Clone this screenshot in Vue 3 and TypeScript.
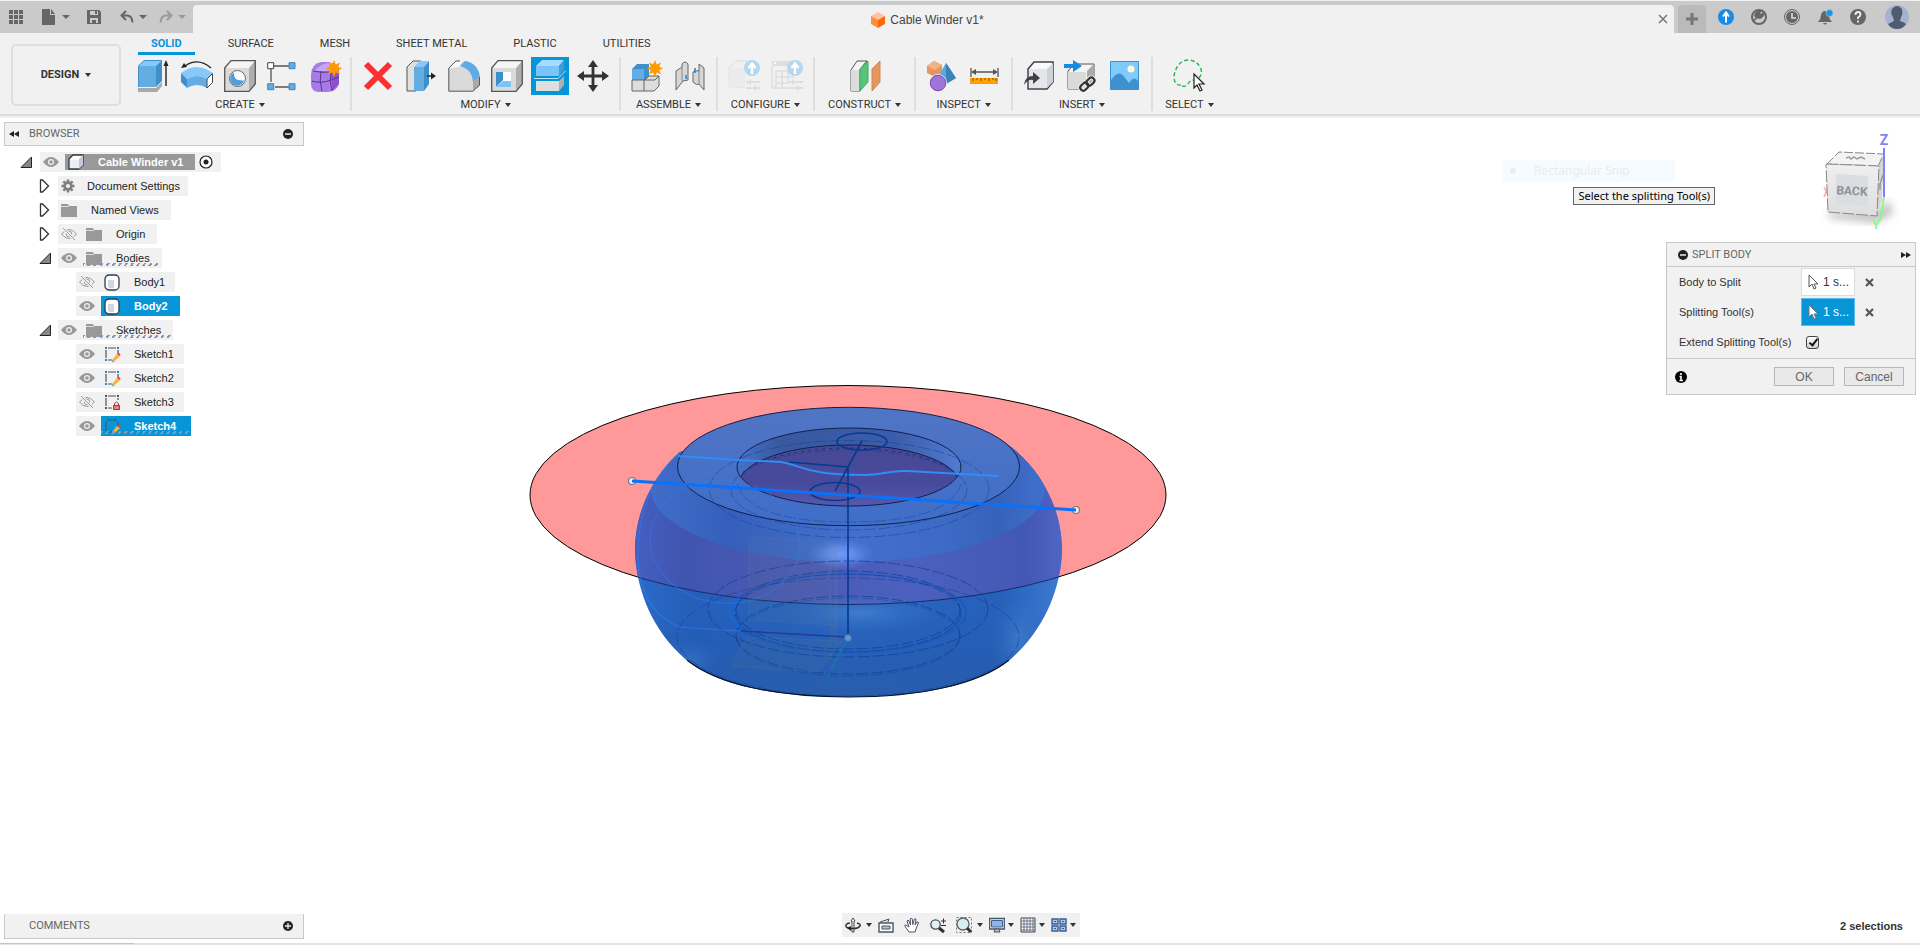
<script setup lang="ts">
import { ref } from 'vue'

interface Tool { name: string; art: string; active?: boolean }
interface Group { label: string; tools: Tool[] }
interface TreeRow {
  label: string; level: number; kind: string; arrow?: 'open' | 'closed'
  eye?: 'on' | 'off'; selected?: boolean; hatched?: boolean
}

const tabs = ['SOLID', 'SURFACE', 'MESH', 'SHEET METAL', 'PLASTIC', 'UTILITIES']
const activeTab = ref('SOLID')
const extend = ref(true)

const star = '<path d="M24 0l1.8 4.4L30 2.6l-1.8 4.2 4 1.6-4 1.6 1.8 4.2-4.2-1.6L24 17l-1.8-4.4-4.2 1.6 1.8-4.2-4-1.6 4-1.6L18 2.6l4.2 1.8z" fill="#f90" />'
const upBadge = '<circle cx="24" cy="8" r="8" fill="#b5d8ef"/><path d="M24 14V4M20.500 8L24 3.500 27.500 8" fill="none" stroke="#fff" stroke-width="2.400"/>'
const sliders = '<path d="M18 22h14M18 28h14M22 19.500v5M27 25.500v5" stroke="#dedede" stroke-width="2"/>'

const groups: Group[] = [
  { label: 'CREATE', tools: [
    { name: 'Extrude', art: '<path d="M0 28h18l6-6v4l-5 6H0z" fill="#a9a9a9"/><path d="M0 6l6-6h18l-6 6z" fill="#86c8fb"/><path d="M18 6l6-6v21l-6 6z" fill="#3f8fcb"/><path d="M0 6h18v21H0z" fill="#64ade3"/><path d="M.5 27V6L6 .5h18" fill="none" stroke="#4391ca"/><path d="M28 26V3" stroke="#222" stroke-width="1.400"/><path d="M28 0l2.500 6h-5z" fill="#222"/>' },
    { name: 'Revolve', art: '<path d="M0 13Q15 1 32 13l-6 6q-10-6-20 0z" fill="#86c8fb"/><path d="M0 13l6 6v9l-6-6z" fill="#3f8fcb"/><path d="M6 19q10-6 20 0v9q-10-6-20 0z" fill="#64ade3"/><path d="M26 19l5.500-5.500v9L26 28z" fill="#fff" stroke="#444"/><path d="M4 6q13-9 26 2" fill="none" stroke="#222" stroke-width="1.300"/><path d="M0 8l3-5 3 4z" fill="#222"/>' },
    { name: 'Hole', art: '<path d="M1 8l7-7h23l-6 7z" fill="#f5f5f5"/><path d="M25 8l6-7v23l-6 7z" fill="#aeaeae"/><path d="M1 8h24v23H1z" fill="#dadada"/><path d="M.7 8L7 .7h24.300V24L25 31.300H.7z" fill="none" stroke="#555" stroke-width="1.300"/><circle cx="13.500" cy="18.500" r="8" fill="#fafafa" stroke="#666"/><path d="M10 12.500q-1 9 10 8a7 7 0 1 1-10-8z" fill="#4f9ddd"/>' },
    { name: 'Sketch pattern', art: '<path d="M7 6h16M4 9v13M8 27h16" stroke="#555" stroke-width="1.300"/><path d="M.7 2.700h6v6h-6z" fill="#fff" stroke="#444"/><g fill="#64ade3" stroke="#3b86c0"><path d="M22 2.700h6v6h-6zM.7 23.700h6v6h-6zM22 23.700h6v6h-6z"/></g>' },
    { name: 'Create form', art: '<path d="M1 15Q1 4 11 2h8q10 2 10 12v10q-2 7-11 8H8q-7-1-7-8z" fill="#a77be8"/><path d="M5 11q6-9 17-8l6 7q-4 4-7 1H8z" fill="#c6a5f5"/><path d="M21 13l8-6v17l-7 7z" fill="#8b4fd0"/><path d="M2 21q9 3 19-1l8-3M11 11q-2 10 1 20M21 12q-2 10 1 19M3 11q9 2 18 1" fill="none" stroke="#5c348d"/><g>' + star + '</g>' },
  ] },
  { label: 'MODIFY', tools: [
    { name: 'Delete', art: '<path d="M4 4l24 24M28 4L4 28" stroke="#fb2f30" stroke-width="6"/>' },
    { name: 'Press pull', art: '<path d="M2 7l6-6h8l-5 6v24H2z" fill="#e0e0e0" stroke="#555"/><path d="M9 7l6-6h9l-5 6z" fill="#86c8fb"/><path d="M19 7l5-6v23l-5 7z" fill="#3f8fcb"/><path d="M9 7h10v24H9z" fill="#64ade3"/><path d="M22 16h6" stroke="#222" stroke-width="1.400"/><path d="M26 12.500l5 3.500-5 3.500z" fill="#222"/>' },
    { name: 'Fillet', art: '<path d="M1 8l7-7h10l6 2 8 13v9l-7 6H1z" fill="#dadada"/><path d="M1 8l7-7h7l-4 6z" fill="#f7f7f7"/><path d="M12 6l5-5q13 2 15 16l-7 5Q24 9 12 6z" fill="#5fabe3"/><path d="M25 22l7-6v9l-7 6z" fill="#aaa"/><path d="M12 1H8L.8 8v23.200H25l6.500-6v-8" fill="none" stroke="#555"/>' },
    { name: 'Shell', art: '<path d="M1 8l7-7h23l-6 7z" fill="#f5f5f5"/><path d="M25 8l6-7v23l-6 7z" fill="#aeaeae"/><path d="M1 8h24v23H1z" fill="#dadada"/><path d="M.7 8L7 .7h24.300V24L25 31.300H.7z" fill="none" stroke="#555" stroke-width="1.300"/><path d="M5 12h15v15H5z" fill="#fff"/><path d="M5 12h7v8l-7 7z" fill="#3f8fcb"/><path d="M5 27l7-6h8v6z" fill="#7cc3f8"/>' },
    { name: 'Split body', active: true, art: '<path d="M2 6l6-6h22l-5 6z" fill="#a5dbff"/><path d="M25 6l5-6v10l-5 6z" fill="#4799d6"/><path d="M2 6h23v10H2z" fill="#7cc3f8"/><path d="M2 21h23l5-5v9l-5 6H2z" fill="#b0b0b0"/><path d="M2 21h23v10H2z" fill="#dedede"/><path d="M0 18.500h24l8-8" fill="none" stroke="#bfe5fc"/>' },
    { name: 'Move', art: '<path d="M16 4v24M4 16h24" stroke="#333" stroke-width="2.800"/><path d="M16 0l5 7H11zM16 32l5-7H11zM0 16l7-5v10zM32 16l-7-5v10z" fill="#333"/>' },
  ] },
  { label: 'ASSEMBLE', tools: [
    { name: 'New component', art: '<path d="M1 9l5-5h12v12l-5 5H1z" fill="#3f8fcb"/><path d="M1 9h12v11H1z" fill="#64ade3"/><path d="M1 20h13l4-4h10v10l-5 5H1z" fill="#ddd" stroke="#666"/><path d="M13 20v11M13 20h11l4-4" fill="none" stroke="#666"/><g>' + star + '</g>' },
    { name: 'Joint', art: '<path d="M2 11l6-4V4q3-4 6 0v16l-5 1-7 9zM30 8l-5-4v7q-4-1-6 1v10q4 4 6 2l5 6z" fill="#d6d6d6" stroke="#666"/><path d="M8 7v14M25 11v13" stroke="#888"/><path d="M12 15v4M21 8v5" stroke="#1687e0" stroke-width="1.500"/>' },
  ] },
  { label: 'CONFIGURE', tools: [
    { name: 'Configuration', art: '<path d="M1 8l7-7h12M1 8v19h16" fill="#f0f0f0" stroke="#dcdcdc"/><path d="M1 8h16v19H1z" fill="#ebebeb"/>' + upBadge + sliders },
    { name: 'Configuration table', art: '<path d="M1 1h28v5H1z" fill="#dedede"/><path d="M1 6v22h18M5 11h18M5 17h18M5 23h12M5 10v18M11 10v18M17 10v14" fill="none" stroke="#dedede" stroke-width="1.500"/><path d="M3 3h2" stroke="#fff" stroke-width="2"/>' + upBadge + sliders },
  ] },
  { label: 'CONSTRUCT', tools: [
    { name: 'Offset plane', art: '<path d="M2 10l6-9h10l-7 8v22H2z" fill="#f5f5f5" stroke="#555"/><path d="M2 10h8v21H2z" fill="#ddd"/><path d="M11 9l8-8v21l-8 9z" fill="#59c37a" stroke="#45a966"/><path d="M23 9l8-8v21l-8 9z" fill="#e5965f" stroke="#d18655"/>' },
  ] },
  { label: 'INSPECT', tools: [
    { name: 'Interference', art: '<path d="M1 6l7-5 8 4v7l-7 5-8-4z" fill="#e5965f"/><path d="M1 6l7-5 8 4-7 5z" fill="#f0b388"/><path d="M20 3l10 15-10 6-7-9z" fill="#5aa7dd"/><path d="M20 3l10 15-10 6z" fill="#3b82b8"/><circle cx="12" cy="23" r="8.500" fill="#9f74dc" stroke="#f1f1f1"/><circle cx="12" cy="23" r="7.700" fill="none" stroke="#7950af"/>' },
    { name: 'Measure', art: '<path d="M2 8v9M29 8v9M4 12h23" stroke="#555" stroke-width="1.300"/><path d="M2 12l5-3v6zM29 12l-5-3v6z" fill="#555"/><path d="M1 18h28v6H1z" fill="#ffa200"/><path d="M4 18v3M8 18v2M12 18v3M16 18v2M20 18v3M24 18v2M27 18v3" stroke="#855300"/>' },
  ] },
  { label: 'INSERT', tools: [
    { name: 'Derive', art: '<path d="M5 9l6-7h19v20l-6 7H5z" fill="#fafafa" stroke="#3f4147" stroke-width="1.500"/><path d="M24 9l6-6v19l-6 6z" fill="#cdd1da"/><path d="M6 9h18v19H6z" fill="#e5e6ea"/><path d="M1 25q1-9 9-9v-4l7 6-7 6v-4q-5-1-9 5z" fill="#3f4147"/>' },
    { name: 'Insert component', art: '<path d="M2 11l6-7h20v18l-7 7H2z" fill="#f4f4f4" stroke="#555"/><path d="M21 11l7-7v18l-7 7z" fill="#aaa"/><path d="M2 12h18v17H2z" fill="#dadada"/><path d="M-2 4h9V0l9 6-9 6V8h-9z" fill="#178be0"/><g fill="none" stroke="#f1f1f1" stroke-width="4"><rect x="14" y="24" width="9" height="6" rx="3" transform="rotate(-45 18 27)"/><rect x="20" y="19" width="9" height="6" rx="3" transform="rotate(-45 24 22)"/></g><g fill="none" stroke="#333" stroke-width="2.200"><rect x="14" y="24" width="9" height="6" rx="3" transform="rotate(-45 18 27)"/><rect x="20" y="19" width="9" height="6" rx="3" transform="rotate(-45 24 22)"/></g>' },
    { name: 'Canvas', art: '<path d="M1.500 1.500h28v28h-28z" fill="#80cafe" stroke="#3f91cd"/><circle cx="22" cy="9" r="3.500" fill="#fffbd0"/><path d="M2 20q8-12 14-2l4 5q5-8 9-2v8H2z" fill="#3e91cd"/>' },
  ] },
  { label: 'SELECT', tools: [
    { name: 'Select', art: '<path d="M8 25Q1 26 1 16 4 0 16 0q9 1 12 9 2 9-7 11-5 1-6 4-3 4-7 1z" fill="none" stroke="#26b45a" stroke-width="1.400" stroke-dasharray="4 2.500"/><path d="M21 14v14l3-3 3 6 2-1-3-6h5z" fill="#fff" stroke="#222" stroke-width="1.200"/>' },
  ] },
]

const rows: TreeRow[] = [
  { label: 'Cable Winder v1', level: 0, kind: 'component', arrow: 'open', eye: 'on' },
  { label: 'Document Settings', level: 1, kind: 'gear', arrow: 'closed' },
  { label: 'Named Views', level: 1, kind: 'folder', arrow: 'closed' },
  { label: 'Origin', level: 1, kind: 'folder', arrow: 'closed', eye: 'off' },
  { label: 'Bodies', level: 1, kind: 'folder', arrow: 'open', eye: 'on', hatched: true },
  { label: 'Body1', level: 2, kind: 'body', eye: 'off' },
  { label: 'Body2', level: 2, kind: 'body', eye: 'on', selected: true },
  { label: 'Sketches', level: 1, kind: 'folder', arrow: 'open', eye: 'on', hatched: true },
  { label: 'Sketch1', level: 2, kind: 'sketch', eye: 'on' },
  { label: 'Sketch2', level: 2, kind: 'sketch', eye: 'on' },
  { label: 'Sketch3', level: 2, kind: 'locked', eye: 'off' },
  { label: 'Sketch4', level: 2, kind: 'sketchdim', eye: 'on', selected: true, hatched: true },
]

const pencil = '<path d="M8 14l5-6 3 2-5 5z" fill="#f8b733"/><path d="M13 8l1.500-1.500 2 2L16 10z" fill="#ee3b3b"/><path d="M8 14l3 1-3 1.500z" fill="#999"/>'
const kinds: Record<string, string> = {
  component: '<path d="M1 5l4-4h10v10l-4 4H1z" fill="#fff" stroke="#333b4a" stroke-width="1.300"/><path d="M11 5l4-4v10l-4 4z" fill="#c4c9d8"/><path d="M2 5.500h9V14H2z" fill="#eceef3"/>',
  gear: '<path d="M7 1.500v13M.5 8h13M2.400 3.400l9.200 9.200M11.600 3.400l-9.200 9.200" stroke="#808080" stroke-width="2.600"/><circle cx="7" cy="8" r="3.400" fill="#f1f1f1" stroke="#808080" stroke-width="2.600"/>',
  folder: '<path d="M0 2h7l1 2h8v11H0z" fill="#999"/><path d="M0 4.500h8" stroke="#ddd"/>',
  body: '<rect x="1" y="1" width="14" height="15" rx="4" fill="#fff" stroke="#333b4a" stroke-width="1.300"/><path d="M4 6h6v8q-4 1-6-1z" fill="#cfd5e2"/>',
  sketch: '<path d="M4 2h8M2 4v8M4 14h4M14 4v4" stroke="#555" stroke-width="1.200"/><path d="M1 1h2v2H1zM13 1h2v2h-2zM1 13h2v2H1z" fill="#1e88d8"/>' + pencil,
  sketchdim: '<path d="M3 2h10M2 4v9M4 14h4M14 4v4" stroke="#43566d" stroke-width="1.200"/>' + pencil,
  locked: '<path d="M4 2h8M2 4v8M4 14h4M14 4v2" stroke="#555" stroke-width="1.200"/><path d="M1 1h2v2H1zM13 1h2v2h-2zM1 13h2v2H1z" fill="#555"/><path d="M9.500 11.500h6v4h-6z" fill="#e77f7f" stroke="#b82d2d"/><path d="M10.500 11V9.500q2-3 4 0V11" fill="none" stroke="#b82d2d"/>',
}

const eyes = {
  on: '<path d="M0 8q8-10 16 0-8 10-16 0z" fill="#999"/><circle cx="8" cy="8" r="3" fill="#f1f1f1"/><circle cx="8" cy="8" r="1.800" fill="#999"/>',
  off: '<path d="M.5 8q7.500-9 15 0-7.500 9-15 0z" fill="none" stroke="#999"/><circle cx="8" cy="8" r="2.800" fill="none" stroke="#999"/><path d="M2 2l12 12" stroke="#f1f1f1" stroke-width="3"/><path d="M2 2l12 12" stroke="#999"/>',
}

const navTools = [
  { name: 'Orbit', menu: true, wide: true, art: '<path d="M8 1l2 3H9v11H7V4H6z" fill="#fff" stroke="#444"/><path d="M12 6q4 1 3 3-2 3-9 2.500Q0 11 1 8q1-2 4-2" fill="none" stroke="#333" stroke-width="1.500"/><path d="M2 11l4-2v5z" fill="#222"/>' },
  { name: 'Look at', menu: false, art: '<path d="M1 6h14v9H1z" fill="#fff" stroke="#4b5563" stroke-width="1.400"/><path d="M2 5l9-3-1 3" fill="#ddd" stroke="#4b5563"/><path d="M4 9h8v3H4z" fill="#bcc3cd" stroke="#4b5563"/>' },
  { name: 'Pan', menu: false, art: '<path d="M5 15Q2 11 .7 8.500 1.500 7 3.500 9L5 10 3 4q1-2 2 0l1.500 4L6.300 2q1-2 2 0l.5 5.500L10.500 2q1.500-1 1.500 1l-1 5 2-3q1.700-.5 1.400 1L12 12l-1 3z" fill="#fff" stroke="#4b5563"/>' },
  { name: 'Zoom', menu: false, art: '<circle cx="5.500" cy="7.500" r="4.700" fill="#e3f1f5" stroke="#44515c" stroke-width="1.300"/><path d="M9 11l5 4" stroke="#333" stroke-width="3"/><path d="M11 4h5M13.500 1.500v5M11 8.500h5" stroke="#333"/>' },
  { name: 'Fit', menu: true, wide: true, art: '<path d="M.5.500h15v15H.500z" fill="none" stroke="#777" stroke-dasharray="2 2"/><circle cx="7" cy="7" r="6" fill="#d8eeed" stroke="#59636b" stroke-width="1.300"/><path d="M11 11l4 4" stroke="#333" stroke-width="3"/>' },
  { name: 'Display settings', menu: true, art: '<path d="M.7 1.500h14.600v10.500H.7z" fill="#fff" stroke="#46566b" stroke-width="1.300"/><path d="M2.500 3.500h11v6.500h-11z" fill="#8fb4e4" stroke="#3f6296"/><path d="M6 12h4l1 3H5z" fill="#bbb" stroke="#555"/>' },
  { name: 'Grid', menu: true, art: '<path d="M1 1h14v14H1z" fill="#fff" stroke="#444"/><path d="M4 1v14M7 1v14M10 1v14M13 1v14M1 4h14M1 7h14M1 10h14M1 13h14" stroke="#667086"/>' },
  { name: 'Viewports', menu: true, art: '<path d="M1 2h6v5H1zM9 2h6v5H9zM1 9h6v5H1zM9 9h6v5H9z" fill="#a9c8ee" stroke="#3b5c91" stroke-width="1.400"/><path d="M3 4.500h2M11 4.500h2M3 11.500h2M11 11.500h2" stroke="#3b5c91"/>' },
]

const statusTools = [
  { name: 'Updates', art: '<circle cx="8" cy="8" r="8" fill="#178be8"/><path d="M8 13.500V4.500M5 7.500L8 3.500l3 4" fill="none" stroke="#fff" stroke-width="2"/>' },
  { name: 'Extensions', art: '<circle cx="8" cy="8" r="7" fill="none" stroke="#666" stroke-width="2"/><path d="M2 13l5-4q1 2 4 0l4-5-2 1-1-2-2 2-1-1 2-2Q4 1 3 7l2 2-4 2z" fill="#666"/>' },
  { name: 'Job status', art: '<circle cx="8" cy="8" r="7.500" fill="none" stroke="#666"/><circle cx="8" cy="8" r="6" fill="#666"/><path d="M8 4v5h4" fill="none" stroke="#ddd" stroke-width="1.600"/>' },
  { name: 'Notifications', art: '<path d="M1 13q3-3 3-7 1-4 4-4 4 1 4 5 0 3 3 6zM6 14h4q-2 3-4 0z" fill="#666"/><circle cx="12.500" cy="4" r="3.500" fill="#1598e5" stroke="#cacaca" stroke-width=".5"/>' },
  { name: 'Help', art: '<circle cx="8" cy="8" r="8" fill="#666"/><path d="M5.500 6q0-3 2.500-3t2.500 2.500Q10.500 7 8 8.500V10M8 11.500v2" fill="none" stroke="#eee" stroke-width="1.800"/>' },
]
</script>

<template>
  <div class="app">
    <header>
      <div class="titlebar">
        <div class="quick">
          <button aria-label="Data panel"><svg viewBox="0 0 14 14" width="14" height="14"><path d="M0 0h4v4H0zM5 0h4v4H5zM10 0h4v4h-4zM0 5h4v4H0zM5 5h4v4H5zM10 5h4v4h-4zM0 10h4v4H0zM5 10h4v4H5zM10 10h4v4h-4z" fill="#666" /></svg></button>
          <button class="file" aria-label="File"><svg viewBox="0 0 14 16" width="14" height="16"><path d="M0 0h8v6h5v10H0zM9 0l4 5H9z" fill="#666" /></svg><i class="caret"></i></button>
          <button class="save" aria-label="Save"><svg viewBox="0 0 14 14" width="14" height="14"><path d="M0 0h12l2 2v12H0z" fill="#666" /><path d="M3 1h8v4H3zM3 8h8v5H3z" fill="#ccc" /><path d="M8 1h2v3H8zM5 10h4v3H5z" fill="#666" /></svg></button>
          <button class="undo" aria-label="Undo"><svg viewBox="0 0 14 14" width="14" height="14"><path d="M6 1L1.500 5.500 6 10M2 5.500h5q5 0 5.500 7" fill="none" stroke="#666" stroke-width="2" /></svg><i class="caret"></i></button>
          <button class="redo" aria-label="Redo"><svg viewBox="0 0 14 14" width="14" height="14"><path d="M8 1l4.500 4.500L8 10M12 5.500H7q-5 0-5.500 7" fill="none" stroke="#999" stroke-width="2" /></svg><i class="caret"></i></button>
        </div>
        <div class="doc">
          <svg viewBox="0 0 14 16" width="14" height="16"><path d="M0 4l7-4 7 4-7 4z" fill="#ffc49d" /><path d="M0 4l7 4v8l-7-4z" fill="#ff8c3c" /><path d="M14 4L7 8v8l7-4z" fill="#f96a0b" /></svg>
          <span>Cable Winder v1*</span>
          <button class="close" aria-label="Close document"><svg viewBox="0 0 8 8" width="8" height="8"><path d="M0 0l8 8M8 0L0 8" stroke="#777" stroke-width="1.500" /></svg></button>
        </div>
        <button class="plus" aria-label="New document"><svg viewBox="0 0 14 14" width="14" height="14"><path d="M7 1v12M1 7h12" stroke="#777" stroke-width="3" /></svg></button>
        <div class="status">
          <button v-for="s in statusTools" :key="s.name" :aria-label="s.name"><svg viewBox="0 0 16 16" width="16" height="16" v-html="s.art"></svg></button>
          <button class="avatar" aria-label="Account"><svg viewBox="0 0 24 24" width="24" height="24"><circle cx="12" cy="12" r="12" fill="#a3b3d1" /><path d="M7 4q5-6 10 0 1 5-1 8l-1 4q4 1 6 3-3 5-9 5t-9-5l6-3-1-4Q5 8 7 4z" fill="#505b70" /></svg></button>
        </div>
      </div>
      <div class="ribbon">
        <button class="design">DESIGN <i class="caret"></i></button>
        <div class="ribbon-main">
          <nav class="tabs">
            <button v-for="t in tabs" :key="t" :class="{ on: t === activeTab }" @click="activeTab = t">{{ t }}</button>
          </nav>
          <div class="groups">
            <section v-for="g in groups" :key="g.label" class="group">
              <div class="tools">
                <button v-for="t in g.tools" :key="t.name" :aria-label="t.name" :class="{ active: t.active }">
                  <svg viewBox="0 0 32 32" width="32" height="32" v-html="t.art"></svg>
                </button>
              </div>
              <button class="group-label">{{ g.label }} <i class="caret"></i></button>
            </section>
          </div>
        </div>
      </div>
    </header>

    <main class="canvas">
      <svg class="model" viewBox="0 0 660 340" width="660" height="340">
        <defs>
          <linearGradient id="shell" x1="0" x2="1" y1="0" y2="0">
            <stop offset="0" stop-color="#2c6cca" /><stop offset=".14" stop-color="#255fba" /><stop offset=".5" stop-color="#2a65bf" />
            <stop offset=".85" stop-color="#2660bb" /><stop offset=".95" stop-color="#3874cd" /><stop offset="1" stop-color="#3e80dc" />
          </linearGradient>
          <linearGradient id="under" x1="0" x2="0" y1="0" y2="1">
            <stop offset=".7" stop-color="#1f55aa" stop-opacity="0" /><stop offset="1" stop-color="#2a5da9" stop-opacity=".9" />
          </linearGradient>
          <linearGradient id="band" x1="0" x2="1" y1="0" y2="0">
            <stop offset=".16" stop-color="#4560c2" /><stop offset=".24" stop-color="#4055b0" /><stop offset=".4" stop-color="#4a5ab2" />
            <stop offset=".6" stop-color="#4c60bf" /><stop offset=".78" stop-color="#4357b4" /><stop offset=".84" stop-color="#5066c6" />
          </linearGradient>
          <linearGradient id="upper" x1="0" x2="1" y1="0" y2="0">
            <stop offset="0" stop-color="#416dc8" /><stop offset=".2" stop-color="#355fba" /><stop offset=".5" stop-color="#4470cc" />
            <stop offset=".75" stop-color="#3c6ac5" /><stop offset=".88" stop-color="#3762bb" /><stop offset="1" stop-color="#406fcb" />
          </linearGradient>
          <linearGradient id="face" x1="0" x2="0" y1="0" y2="1"><stop offset="0" stop-color="#5175c4" /><stop offset="1" stop-color="#3f6dc8" /></linearGradient>
          <linearGradient id="wall" x1="0" x2="1" y1="0" y2="0"><stop offset="0" stop-color="#4771c8" /><stop offset=".2" stop-color="#38589f" /><stop offset=".7" stop-color="#3b5ca9" /><stop offset="1" stop-color="#527ad0" /></linearGradient>
          <linearGradient id="hole" x1="0" x2="0" y1="0" y2="1"><stop offset="0" stop-color="#484994" /><stop offset=".5" stop-color="#474a9c" /><stop offset=".8" stop-color="#565bad" /><stop offset="1" stop-color="#4c519f" /></linearGradient>
          <radialGradient id="glow"><stop offset="0" stop-color="#6d99fb" /><stop offset=".4" stop-color="#6791ef" stop-opacity=".8" /><stop offset="1" stop-color="#557de0" stop-opacity="0" /></radialGradient>
          <radialGradient id="soft"><stop offset="0" stop-color="#4b87d5" stop-opacity=".8" /><stop offset="1" stop-color="#3875cb" stop-opacity="0" /></radialGradient>
          <clipPath id="body"><path d="M161 82C137 103 116 138 116 181 117 215 130 254 160 283 188 313 250 327 329 327s141-14 169-44c30-29 44-68 45-102 0-43-21-78-45-99-45-44-169-44-169-44T161 82z" /></clipPath>
          <clipPath id="rim"><ellipse cx="330" cy="97" rx="112" ry="39" /></clipPath>
        </defs>
        <ellipse cx="329" cy="125" rx="318" ry="109.500" fill="#f99" stroke="#000" />
        <g clip-path="url(#body)">
          <path d="M110 30h440v300H110z" fill="url(#shell)" />
          <ellipse cx="329" cy="125" rx="318" ry="109.500" fill="url(#band)" />
          <ellipse cx="329" cy="119" rx="197" ry="73" fill="url(#upper)" />
          <path d="M110 30h440v300H110z" fill="url(#under)" />
          <ellipse cx="342" cy="243" rx="82" ry="20" fill="url(#soft)" opacity=".8" />
          <ellipse cx="170" cy="290" rx="32" ry="22" fill="url(#soft)" opacity=".5" />
          <ellipse cx="500" cy="270" rx="30" ry="45" fill="url(#soft)" opacity=".7" />
          <ellipse cx="322" cy="184" rx="34" ry="16" fill="url(#glow)" />
          <path d="M11 125A318 109.500 0 0 0 647 125" fill="none" stroke="#162d65" />
        </g>
        <path d="M168 290C198 314 256 327 329 327s131-13 161-37" fill="none" stroke="#06142d" stroke-width="1.200" />
        <ellipse cx="329.500" cy="96.500" rx="171" ry="59.200" fill="url(#face)" stroke="#10204c" />
        <ellipse cx="330" cy="97" rx="112" ry="39" fill="url(#wall)" />
        <g clip-path="url(#rim)"><ellipse cx="330" cy="114" rx="110" ry="39" fill="url(#hole)" stroke="#10204c" /><ellipse cx="330" cy="119" rx="116" ry="41" fill="none" stroke="#1b2e70" stroke-dasharray="3 4" /></g>
        <ellipse cx="330" cy="97" rx="112" ry="39" fill="none" stroke="#10204c" />
        <g fill="none" stroke="#0d3e91" stroke-opacity=".7" stroke-dasharray="12 3">
          <ellipse cx="330" cy="119" rx="140" ry="48.500" stroke-opacity=".45" />
          <ellipse cx="330" cy="120" rx="118" ry="40" stroke-opacity=".45" />
          <path d="M218 114q12 38 112 38t112-38" stroke-opacity=".4" />
          <ellipse cx="329" cy="239" rx="140" ry="48" />
          <ellipse cx="329" cy="267" rx="171" ry="59" stroke-opacity=".5" />
          <ellipse cx="329" cy="240" rx="112" ry="39" />
          <ellipse cx="329" cy="243" rx="113" ry="39" />
          <ellipse cx="329" cy="265" rx="112" ry="39" />
          <ellipse cx="329" cy="267" rx="112" ry="39" stroke-opacity=".4" />
        </g>
        <ellipse cx="329" cy="243" rx="118" ry="39" fill="none" stroke="#0a56c5" stroke-width="2" opacity=".45" />
        <path d="M220 228q-18 14 0 29" fill="none" stroke="#176bdc" stroke-width="3" opacity=".7" />
        <g fill="#7e8a78" fill-opacity=".07" stroke="#8d977f" stroke-opacity=".14"><path d="M230 167l87 5v83l-87-5zM228 267l95 4-24 31-87-6zM311 195l7-20v96l-7 18z" /></g>
        <g fill="none" stroke="#2e80ef" stroke-width="1.500">
          <path d="M159 86l60 4 43 2c23 4 25 13 84 13 24-1 24-5 42-4l92 5" stroke="#2f8cf8" stroke-width="2" />
          <ellipse cx="206" cy="172" rx="75" ry="61" transform="rotate(5 206 172)" opacity=".35" />
          <path d="M160 257l61 4M161 82Q122 117 119 177t41 80" opacity=".5" />
        </g>
        <g fill="none" stroke="#063990" stroke-width="1.600">
          <ellipse cx="343" cy="71.500" rx="25" ry="8.500" /><ellipse cx="316" cy="121.500" rx="25" ry="9" />
          <path d="M343 71l-14 26-13 24M270 92l59 5M329 97v171" />
          <path d="M222 261l107 6" stroke="#253c8f" />
        </g>
        <path d="M327 271l-15 29M310 303l-1 4" stroke="#187d9c" stroke-width="1.400" />
        <circle cx="329" cy="268" r="3.500" fill="#6794c9" stroke="#3e6da8" />
        <path d="M113 111l444 29" stroke="#0a71f8" stroke-width="3" />
        <g fill="#e8eef8" stroke="#777" stroke-width="1.200"><circle cx="113" cy="111" r="3.500" /><circle cx="557" cy="140" r="3.500" /></g>
        <path d="M113 111l4 .3M553 139.700l4 .3" stroke="#0a71f8" stroke-width="3" />
      </svg>

      <aside class="browser">
        <div class="panel-head">
          <button aria-label="Collapse browser"><svg viewBox="0 0 10 6" width="10" height="6"><path d="M5 0v6L0 3zM10 0v6L5 3z" fill="#222" /></svg></button>
          <h2>BROWSER</h2>
          <button aria-label="Minimise browser"><svg viewBox="0 0 10 10" width="10" height="10"><circle cx="5" cy="5" r="5" fill="#222" /><path d="M2 5h6" stroke="#eee" stroke-width="1.500" /></svg></button>
        </div>
        <ul>
          <li v-for="r in rows" :key="r.label" :class="['row', 'l' + r.level, r.kind, { selected: r.selected, hatched: r.hatched }]">
            <button v-if="r.arrow" class="arrow" :aria-label="'Toggle ' + r.label">
              <svg v-if="r.arrow === 'open'" viewBox="0 0 12 12" width="12" height="12"><path d="M11.500 1v10.500H1z" fill="#888" stroke="#222" /></svg>
              <svg v-else viewBox="0 0 12 14" width="12" height="14"><path d="M1.500 1h2l6 6-6 6h-2z" fill="#fff" stroke="#333" stroke-width="1.300" /></svg>
            </button>
            <div class="cell">
              <button v-if="r.eye" class="eye" :aria-label="'Show ' + r.label"><svg viewBox="0 0 16 16" width="16" height="16" v-html="eyes[r.eye]"></svg></button>
              <span class="name"><svg viewBox="0 0 16 16" width="16" height="16" v-html="kinds[r.kind]"></svg><span class="text">{{ r.label }}</span></span>
              <svg v-if="r.level === 0" class="target" viewBox="0 0 14 14" width="14" height="14"><circle cx="7" cy="7" r="6" fill="#fff" stroke="#222" stroke-width="1.200" /><circle cx="7" cy="7" r="2.500" fill="#222" /></svg>
            </div>
          </li>
        </ul>
      </aside>

      <div class="snip"><i></i><span>Rectangular Snip</span></div>
      <div class="tip" role="tooltip">Select the splitting Tool(s)</div>

      <svg class="cube" viewBox="0 0 90 110" width="90" height="110">
        <defs>
          <filter id="shade"><feGaussianBlur stdDeviation="4" /></filter>
          <linearGradient id="front" x1="0" x2="0" y1="0" y2="1"><stop offset="0" stop-color="#efefef" /><stop offset="1" stop-color="#dedede" /></linearGradient>
        </defs>
        <path d="M16 82l50-2 11-10 4 14-18 9-46-5z" fill="#999" opacity=".6" filter="url(#shade)" />
        <path d="M17 54l-5 13M12 57l5 9" stroke="#faa" stroke-width="1.500" />
        <path d="M66 36l6-13-2 47-6 16z" fill="#d6d6d6" />
        <path d="M72 18v49" stroke="#8080ff" stroke-width="2" />
        <path d="M72 67l-4 24" stroke="#8cf58c" stroke-width="2" />
        <path d="M15 34l12-12 45 2-6 12z" fill="#f3f3f3" stroke="#888" stroke-dasharray="9 2" />
        <path d="M14 34l53 2-2 50-49-4z" fill="url(#front)" stroke="#888" stroke-dasharray="12 2" />
        <path d="M24 44l32 2v30l-32-3z" fill="#dadde1" />
        <path d="M68 54l3-9M68 60v-6M34 28l3-1 2 2 3-2 3 2 4-2 4 2" fill="none" stroke="#999" stroke-width="1.500" />
        <text x="40" y="65" text-anchor="middle" transform="rotate(3 40 60)">BACK</text>
        <text class="z" x="72" y="15" text-anchor="middle">Z</text>
        <text class="y" x="64" y="99" text-anchor="middle">Y</text>
      </svg>

      <form class="dialog" @submit.prevent>
        <div class="dialog-head">
          <svg viewBox="0 0 10 10" width="10" height="10"><circle cx="5" cy="5" r="5" fill="#222" /><path d="M2 5h6" stroke="#eee" stroke-width="1.500" /></svg>
          <h2>SPLIT BODY</h2>
          <button type="button" aria-label="Expand"><svg viewBox="0 0 10 6" width="10" height="6"><path d="M5 0v6l5-3zM0 0v6l5-3z" fill="#222" /></svg></button>
        </div>
        <div class="fields">
          <label for="body-pick">Body to Split</label>
          <button id="body-pick" type="button" class="pick"><svg viewBox="0 0 12 16" width="12" height="16"><path d="M1 1v12l3-3 2 5 2-1-2-4h4z" fill="#fff" stroke="#555" /></svg>1 s...</button>
          <button type="button" class="clear" aria-label="Clear body"><svg viewBox="0 0 9 9" width="9" height="9"><path d="M1 1l7 7M8 1L1 8" stroke="#555" stroke-width="2.200" /></svg></button>
          <label for="tool-pick">Splitting Tool(s)</label>
          <button id="tool-pick" type="button" class="pick on"><svg viewBox="0 0 12 16" width="12" height="16"><path d="M1 1v12l3-3 2 5 2-1-2-4h4z" fill="#fff" stroke="#777" /></svg>1 s...</button>
          <button type="button" class="clear" aria-label="Clear tool"><svg viewBox="0 0 9 9" width="9" height="9"><path d="M1 1l7 7M8 1L1 8" stroke="#555" stroke-width="2.200" /></svg></button>
          <label for="extend">Extend Splitting Tool(s)</label>
          <input id="extend" v-model="extend" type="checkbox">
        </div>
        <div class="actions">
          <svg viewBox="0 0 12 12" width="12" height="12"><circle cx="6" cy="6" r="6" fill="#000" /><path d="M6 2v2M4.500 5.500H6V9M4.500 9.500h3.500" fill="none" stroke="#fff" stroke-width="1.600" /></svg>
          <button type="submit">OK</button>
          <button type="button">Cancel</button>
        </div>
      </form>

      <div class="comments">
        <h2>COMMENTS</h2>
        <button aria-label="Open comments"><svg viewBox="0 0 10 10" width="10" height="10"><circle cx="5" cy="5" r="5" fill="#222" /><path d="M2 5h6M5 2v6" stroke="#eee" stroke-width="1.300" /></svg></button>
      </div>
      <nav class="navbar">
        <button v-for="n in navTools" :key="n.name" :aria-label="n.name" :class="{ plain: !n.menu, wide: n.wide }"><svg viewBox="0 0 16 16" width="16" height="16" v-html="n.art"></svg><i v-if="n.menu" class="caret"></i></button>
      </nav>
      <p class="count">2 selections</p>
    </main>
    <footer><i></i></footer>
  </div>
</template>

<style>
body { margin: 0; }
</style>

<style scoped>
.app { display: flex; flex-direction: column; min-height: 100vh; background: #fff; color: #333; font: 11px/16px "Liberation Sans", Arial, sans-serif; }
button { display: flex; align-items: center; padding: 0; border: 0; background: none; color: inherit; font: inherit; }
svg { display: block; flex: none; overflow: visible; }
h2, ul, p { margin: 0; padding: 0; font-weight: normal; }
ul { list-style: none; }
.caret { display: inline-block; width: 0; border: 3px solid transparent; border-top: 4px solid #333; border-bottom: 0; }
h2, .tabs, .design, .group-label { font: 11px/16px Roboto, "Liberation Sans", sans-serif; }

header { height: 118px; background: #f1f1f1; }
.titlebar { display: flex; height: 32px; background: #cacaca; border-top: 1px solid #f1f1f1; }
.quick { display: flex; flex: none; align-items: center; box-sizing: border-box; width: 193px; padding-left: 9px; }
.quick .caret { border-top-color: #666; border-left-width: 4px; border-right-width: 4px; margin-left: 6px; }
.file { margin-left: 19px; }
.save { margin-left: 17px; }
.undo { margin-left: 19px; }
.undo .caret, .redo .caret { margin-left: 5px; }
.redo { margin-left: 12px; }
.redo .caret { border-top-color: #999; }
.doc { display: flex; flex: 1; position: relative; align-items: center; justify-content: center; gap: 5px; margin-top: 4px; padding: 2px 12px 0 0; background: #f1f1f1; border-radius: 4px 4px 0 0; font-size: 12px; color: #444; }
.doc .close { position: absolute; right: 7px; top: 10px; }
.plus { justify-content: center; width: 28px; margin: 4px 12px 0 4px; background: #bababa; border-radius: 4px 4px 0 0; }
.status { display: flex; align-items: center; gap: 17px; padding-right: 11px; }
.avatar { margin-left: 2px; }

.ribbon { display: flex; height: 81px; border-bottom: 2px solid #dcdcdc; }
.design { justify-content: center; gap: 6px; width: 110px; height: 62px; margin: 11px 17px 0 11px; border: 2px solid #dedede; border-radius: 5px; box-sizing: border-box; font-weight: bold; }
.tabs { display: flex; gap: 20px; height: 22px; }
.tabs button { align-items: flex-end; padding: 0 13px; border-bottom: 3px solid transparent; }
.tabs .on { color: #0696d7; border-bottom-color: #0696d7; font-weight: bold; }
.groups { display: flex; margin-top: 2px; }
.group { display: flex; flex-direction: column; align-items: center; padding: 0 10px; border-right: 2px solid #dedede; height: 54px; }
.group:first-child { padding-left: 0; padding-right: 8px; }
.group:nth-child(5) { padding: 0 13px; }
.group:last-child { border: 0; padding: 0 12px; }
.tools { display: flex; gap: 11px; margin-top: 3px; }
.tools button { width: 32px; height: 32px; }
.tools .active { outline: 3px solid #0696d7; background: #0696d7; }
.group-label { gap: 4px; margin-top: 5px; white-space: nowrap; }

.canvas { flex: 1; position: relative; overflow: hidden; }
.model { position: absolute; left: calc(50% - 441px); top: 252px; }
.browser { position: absolute; left: 4px; top: 4px; width: 300px; }
.panel-head { display: flex; align-items: center; height: 22px; padding: 0 10px 0 4px; background: #f1f1f1; border: 1px solid #c8c8c8; }
.panel-head h2 { flex: 1; margin-left: 10px; color: #666; }
.browser ul { padding-top: 6px; }
.row { display: flex; height: 20px; margin-bottom: 4px; }
.arrow { width: 12px; justify-content: center; }
.l0 .arrow { margin: 0 8px 0 16px; }
.l1 .arrow { margin: 0 7px 0 35px; }
.l2 { margin-left: 72px; }
.cell { display: flex; align-items: center; background: #f1f1f1; }
.eye { margin: 0 6px 0 3px; }
.name { display: flex; position: relative; align-items: center; align-self: stretch; padding: 0 10px 0 3px; }
.text { margin-left: 14px; color: #222; }
.l1 .name { padding-right: 12px; }
.l1.gear .name { padding-right: 8px; }
.gear .text { margin-left: 10px; }
.l0 .name { align-self: center; height: 16px; margin-right: 4px; padding-right: 12px; background: #999; }
.l0 .text { font-weight: bold; color: #fff; }
.target { margin-right: 8px; }
.selected .name { background: #0696d7; padding-right: 12px; }
.selected .text { color: #fff; font-weight: bold; }
.sketchdim .name { padding-right: 15px; }
.hatched .name::after { content: ""; position: absolute; left: 0; right: 2px; bottom: 2px; height: 3px; background: repeating-linear-gradient(125deg, #8797b5 0 2px, transparent 2px 5px); }

.snip { position: absolute; right: 245px; top: 42px; display: flex; align-items: center; width: 173px; height: 22px; background: #f5fbff; color: #ececec; font: 12px/16px "Noto Sans", sans-serif; }
.snip i { width: 6px; height: 6px; margin: 0 8px; border-radius: 50%; background: #ededed; }
.snip span { margin-left: 10px; }
.tip { position: absolute; right: 205px; top: 69px; padding: 0 4px; border: 1px solid #666; background: #f1f1f1; color: #000; font: 11px/16px "Noto Sans", sans-serif; white-space: nowrap; }
.cube { position: absolute; right: 18px; top: 12px; }
.cube text { font: bold 12px/13px Roboto, sans-serif; fill: #8e9298; }
.cube .z { font-size: 14px; fill: #8080ff; }
.cube .y { font-size: 12px; fill: #8cf58c; }

.dialog { position: absolute; right: 4px; top: 124px; width: 248px; border: 1px solid #c8c8c8; background: #f1f1f1; }
.dialog-head { display: flex; align-items: center; gap: 4px; height: 23px; padding: 0 4px 0 11px; border-bottom: 1px solid #c8c8c8; }
.dialog-head h2 { flex: 1; color: #666; }
.fields { display: grid; grid-template-columns: 122px 54px 1fr; grid-auto-rows: 28px; row-gap: 2px; align-items: center; padding: 1px 0 2px 12px; }
.fields label { white-space: nowrap; }
.pick { box-sizing: border-box; height: 28px; gap: 3px; padding-left: 6px; border: 1px solid #dcdcdc; background: #fff; font-size: 12px; }
.pick.on { background: #0696d7; border-color: #59b8e7; color: #fff; }
.clear { margin-left: 10px; }
.fields input { appearance: none; position: relative; width: 13px; height: 13px; margin: 0 0 0 5px; border: 1px solid #444; border-radius: 3px; box-sizing: border-box; background: linear-gradient(#fff, #ccc); }
.fields input:checked::after { content: ""; position: absolute; left: 4px; top: 0; width: 3px; height: 7px; border: solid #111; border-width: 0 2px 2px 0; transform: rotate(38deg); }
.actions { display: flex; align-items: center; gap: 10px; height: 35px; padding: 0 11px 0 8px; border-top: 1px solid #c8c8c8; }
.actions svg { margin-right: auto; }
.actions button { justify-content: center; box-sizing: border-box; width: 60px; height: 19px; border: 1px solid #b8b8b8; background: #e9e9e9; color: #666; font-size: 12px; }

.comments { position: absolute; left: 4px; bottom: 4px; display: flex; align-items: center; justify-content: space-between; box-sizing: border-box; width: 300px; height: 25px; padding: 0 10px 0 24px; border: 1px solid #c8c8c8; border-top: 0; background: #f1f1f1; }
.comments h2 { color: #666; }
.navbar { position: absolute; left: calc(50% - 118px); bottom: 6px; display: flex; align-items: center; gap: 6px; height: 24px; padding: 0 4px 0 3px; background: #f1f1f1; }
.navbar .caret { margin-left: 3px; }
.navbar .wide .caret { margin-left: 5px; }
.navbar .plain { margin-right: 4px; }
.count { position: absolute; right: 17px; bottom: 9px; font-weight: bold; }
footer { height: 2px; background: #e2e2e2; }
footer i { display: block; width: 134px; height: 1px; background: #c4c4c4; }
</style>
